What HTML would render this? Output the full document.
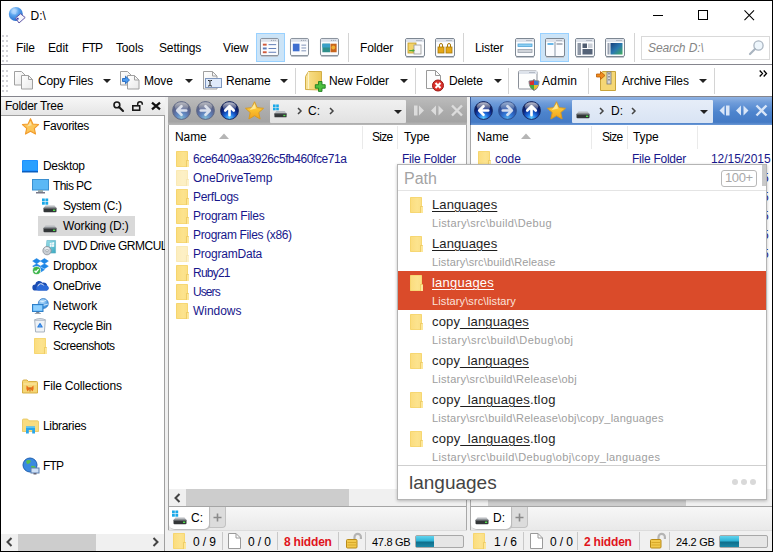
<!DOCTYPE html>
<html>
<head>
<meta charset="utf-8">
<title>D:\</title>
<style>
html,body{margin:0;padding:0;}
body{width:773px;height:552px;overflow:hidden;background:#fff;font-family:"Liberation Sans",sans-serif;font-size:12px;color:#000;}
#win{position:absolute;left:0;top:0;width:773px;height:552px;background:#f0f0f0;overflow:hidden;}
#frame{position:absolute;left:0;top:0;width:771px;height:550px;border:1px solid #000;z-index:100;pointer-events:none;}
.a{position:absolute;}
.t{position:absolute;white-space:nowrap;line-height:14px;height:14px;}
svg{position:absolute;overflow:visible;}
/* title bar */
#title{left:0;top:0;width:773px;height:31px;background:#fff;}
/* menu bar */
#menu{left:0;top:0;width:773px;height:64px;}
#menuline{left:0;top:64px;width:773px;height:1px;background:#85858d;}
#tool{left:0;top:0;width:773px;height:96px;}
#toolline{left:0;top:96px;width:773px;height:1px;background:#85858d;}
.sep{position:absolute;width:1px;background:#d0d0d0;}

.mt{position:absolute;top:41px;white-space:nowrap;line-height:14px;font-size:12px;letter-spacing:-0.15px;}
.tt{position:absolute;top:74px;white-space:nowrap;line-height:14px;font-size:12px;letter-spacing:-0.15px;}
.dd{position:absolute;top:79px;width:0;height:0;border-left:4px solid transparent;border-right:4px solid transparent;border-top:4px solid #222;}
.grip{position:absolute;left:2px;width:6px;height:27px;background:
 radial-gradient(circle at 1px 1px,#d2d2d8 1px,transparent 1.2px) 0 0/4px 5px;}
.vsep{position:absolute;width:1px;background:#d4d4d4;}
.ib{position:absolute;top:35px;width:26px;height:24px;}
.ibsel{position:absolute;top:33px;width:27px;height:27px;background:#cce4f7;border:1px solid #99d1ff;}

/* tree */
#tree{left:0;top:97px;width:165px;height:455px;overflow:hidden;}
.tr{position:absolute;white-space:nowrap;line-height:14px;font-size:12px;letter-spacing:-0.28px;}
/* panes */
.ph{position:absolute;top:97px;height:28px;}
.pbox{position:absolute;top:100px;height:23px;border-radius:1px;}
.ch{position:absolute;top:130px;white-space:nowrap;line-height:14px;font-size:12px;letter-spacing:-0.1px;}
.fn{position:absolute;white-space:nowrap;line-height:14px;font-size:12px;color:#17178c;letter-spacing:-0.05px;}
.fi{position:absolute;width:12px;height:16px;border-radius:1px;background:linear-gradient(90deg,#fbdc7c,#fce38e 60%,#fbdf84);box-shadow:inset 0 0 0 1px rgba(243,207,98,.55);}
.fi:after{content:'';position:absolute;right:-1px;bottom:0;width:2px;height:6px;background:#fde79a;border-left:1px solid #efcd66;border-top:1px solid #efcd66;border-radius:1px 1px 0 0;}
.fi.h{opacity:.5}
.st{position:absolute;top:535px;white-space:nowrap;line-height:14px;font-size:12px;letter-spacing:-0.1px;}
.ssep{position:absolute;top:532px;width:1px;height:18px;background:#c8c8c8;}
.nav{position:absolute;top:101px;width:19px;height:19px;}

/* popup */
#pop{left:397px;top:164px;width:370px;height:336px;box-sizing:border-box;border:1px solid #b4b4b4;background:#fff;box-shadow:0 1px 3px rgba(0,0,0,.25);overflow:hidden;}
.pr{position:absolute;left:0;width:368px;height:39px;}
.pr.sel{background:#da4b2a;}
.pn{position:absolute;left:34px;top:4px;white-space:nowrap;font-size:13px;line-height:16px;color:#1e1e1e;letter-spacing:0.13px;}
.pn u{text-decoration:underline;text-decoration-thickness:1px;text-underline-offset:2px;}
.pp{position:absolute;left:34px;top:24px;white-space:nowrap;font-size:11px;line-height:13px;color:#9e9e9e;letter-spacing:0.28px;}
.sel .pn{color:#fff}.sel .pp{color:#fbe3dc}
.pf{position:absolute;left:12px;top:4px;width:12px;height:16px;border-radius:1px;background:linear-gradient(90deg,#fbdc7c,#fce38e 60%,#fbdf84);box-shadow:inset 0 0 0 1px rgba(243,207,98,.55);}
.pf:after{content:'';position:absolute;right:-1px;bottom:0;width:2px;height:6px;background:#fde79a;border-left:1px solid #efcd66;border-top:1px solid #efcd66;border-radius:1px 1px 0 0;}
</style>
</head>
<body>
<div id="win">
<div class="a" style="left:0;top:0;width:773px;height:96px;background:#fff"></div>
<!-- TITLE BAR -->
<div id="title" class="a">

  <svg style="left:8px;top:6px" width="18" height="18" viewBox="0 0 18 18">
    <defs><radialGradient id="gl" cx="38%" cy="28%" r="75%"><stop offset="0" stop-color="#d9ecff"/><stop offset="0.45" stop-color="#58a3ee"/><stop offset="1" stop-color="#2468c8"/></radialGradient></defs>
    <circle cx="7.800" cy="8" r="7" fill="url(#gl)"/>
    <path d="M3 6 Q6 3 9 4 Q7 6 8 8 Q5 9 3 6Z" fill="#a9d3ff" opacity=".7"/>
    <path d="M7.500 12 L12.500 7.800 L17.200 11.500 L11 17Z" fill="#f6f6fc" stroke="#6058a8" stroke-width="1"/>
    <rect x="8.800" y="11.800" width="1.800" height="1.800" fill="#3b3bb0"/>
  </svg>
  <div class="t" style="left:30.500px;top:9px;font-size:12px;">D:\</div>
  <div class="a" style="left:653px;top:15px;width:10px;height:1px;background:#000"></div>
  <div class="a" style="left:698px;top:10px;width:8px;height:8px;border:1px solid #000"></div>
  <svg style="left:743.5px;top:10px" width="10.500" height="10.500" viewBox="0 0 11 11"><path d="M0.5 0.5 L10.5 10.5 M10.5 0.5 L0.5 10.5" stroke="#000" stroke-width="1.1" fill="none"/></svg>
</div>
<!-- MENU BAR -->
<div id="menu" class="a">
  <div class="grip" style="top:35px"></div>
  <div class="mt" style="left:16px">File</div>
  <div class="mt" style="left:48px">Edit</div>
  <div class="mt" style="left:82px;letter-spacing:-0.8px">FTP</div>
  <div class="mt" style="left:116px">Tools</div>
  <div class="mt" style="left:159px">Settings</div>
  <div class="mt" style="left:223px">View</div>
  <div class="ibsel" style="left:256px"></div>
  <!-- view icon 1: details -->
  <svg style="left:260px;top:38px" width="19" height="19" viewBox="0 0 20 20">
    <rect x="1" y="18.500" width="18" height="1.500" rx=".7" fill="#c4c8cf"/><rect x="0.5" y="0.5" width="19" height="18" rx="1.5" fill="#fbfcfe" stroke="#7d8792"/>
    <rect x="1" y="1" width="18" height="3" fill="#dde2ea"/><rect x="11.500" y="2" width="1" height="1" fill="#8a93a0"/><rect x="13.500" y="2" width="1" height="1" fill="#8a93a0"/><rect x="15.500" y="2" width="1" height="1" fill="#8a93a0"/>
    <rect x="3" y="6" width="4" height="2" fill="#d05a3a"/><rect x="9" y="6.5" width="8" height="1" fill="#5b79b5"/>
    <rect x="3" y="10" width="4" height="2" fill="#5b79b5"/><rect x="9" y="10.5" width="8" height="1" fill="#5b79b5"/>
    <rect x="3" y="14" width="4" height="2" fill="#d05a3a"/><rect x="9" y="14.5" width="8" height="1" fill="#5b79b5"/>
  </svg>
  <!-- view icon 2 -->
  <svg style="left:290px;top:38px" width="19" height="19" viewBox="0 0 20 20">
    <rect x="1" y="18.500" width="18" height="1.500" rx=".7" fill="#c4c8cf"/><rect x="0.5" y="0.5" width="19" height="18" rx="1.5" fill="#fbfcfe" stroke="#7d8792"/>
    <rect x="1" y="1" width="18" height="3" fill="#dde2ea"/><rect x="11.500" y="2" width="1" height="1" fill="#8a93a0"/><rect x="13.500" y="2" width="1" height="1" fill="#8a93a0"/><rect x="15.500" y="2" width="1" height="1" fill="#8a93a0"/>
    <rect x="3" y="6" width="7" height="8" fill="#3f6fd0"/>
    <rect x="12" y="7" width="5" height="1" fill="#7b8fb5"/><rect x="12" y="10" width="5" height="1" fill="#7b8fb5"/><rect x="12" y="13" width="5" height="1" fill="#7b8fb5"/>
  </svg>
  <!-- view icon 3 -->
  <svg style="left:320px;top:38px" width="19" height="19" viewBox="0 0 20 20">
    <rect x="1" y="18.500" width="18" height="1.500" rx=".7" fill="#c4c8cf"/><rect x="0.5" y="0.5" width="19" height="18" rx="1.5" fill="#fbfcfe" stroke="#7d8792"/>
    <rect x="1" y="1" width="18" height="3" fill="#dde2ea"/><rect x="11.500" y="2" width="1" height="1" fill="#8a93a0"/><rect x="13.500" y="2" width="1" height="1" fill="#8a93a0"/><rect x="15.500" y="2" width="1" height="1" fill="#8a93a0"/>
    <rect x="2.5" y="6" width="8" height="9" fill="#2f8f8a"/><rect x="2.5" y="6" width="8" height="4" fill="#3aa0c8"/>
    <rect x="11" y="6" width="6.5" height="9" fill="#c8641c"/><circle cx="14" cy="10" r="2" fill="#f0b030"/>
  </svg>
  <div class="vsep" style="left:348px;top:33px;height:29px"></div>
  <div class="mt" style="left:360px">Folder</div>
  <!-- folder icon 1 -->
  <svg style="left:405px;top:38px" width="20" height="19" viewBox="0 0 20 19">
    <rect x="1" y="18.500" width="18" height="1.500" rx=".7" fill="#c4c8cf"/><rect x="0.5" y="0.5" width="19" height="18" rx="1.5" fill="#fbfcfe" stroke="#7d8792"/>
    <rect x="1" y="1" width="18" height="3" fill="#dde2ea"/><rect x="11.500" y="2" width="1" height="1" fill="#8a93a0"/><rect x="13.500" y="2" width="1" height="1" fill="#8a93a0"/><rect x="15.500" y="2" width="1" height="1" fill="#8a93a0"/>
    <rect x="3" y="5" width="8" height="10" fill="#f3d36a" stroke="#c09a20" stroke-width=".8"/>
    <rect x="9" y="7" width="7" height="9" fill="#f6f6f6" stroke="#9a9a9a" stroke-width=".8"/>
    <path d="M4 12 h5 v-1.5 l3 2.5 -3 2.5 v-1.5 h-5z" fill="#4aa83a" transform="scale(.7) translate(2,5)"/>
  </svg>
  <!-- folder icon 2 -->
  <svg style="left:435px;top:38px" width="20" height="19" viewBox="0 0 20 19">
    <rect x="1" y="18.500" width="18" height="1.500" rx=".7" fill="#c4c8cf"/><rect x="0.5" y="0.5" width="19" height="18" rx="1.5" fill="#fbfcfe" stroke="#7d8792"/>
    <rect x="1" y="1" width="18" height="3" fill="#dde2ea"/><rect x="11.500" y="2" width="1" height="1" fill="#8a93a0"/><rect x="13.500" y="2" width="1" height="1" fill="#8a93a0"/><rect x="15.500" y="2" width="1" height="1" fill="#8a93a0"/>
    <rect x="3" y="9" width="6" height="6" fill="#e6a817" stroke="#a87808" stroke-width=".8"/>
    <path d="M4.5 9 v-2 a1.5 1.5 0 0 1 3 0 v2" fill="none" stroke="#a87808"/>
    <rect x="11" y="9" width="6" height="6" fill="#e6a817" stroke="#a87808" stroke-width=".8"/>
    <path d="M12.5 9 v-2 a1.5 1.5 0 0 1 3 0 v2" fill="none" stroke="#a87808"/>
  </svg>
  <div class="vsep" style="left:463px;top:33px;height:29px"></div>
  <div class="mt" style="left:475px">Lister</div>
  <!-- lister icon 1 -->
  <svg style="left:515px;top:38px" width="20" height="19" viewBox="0 0 20 19">
    <rect x="1" y="18.500" width="18" height="1.500" rx=".7" fill="#c4c8cf"/><rect x="0.5" y="0.5" width="19" height="18" rx="1.5" fill="#fbfcfe" stroke="#7d8792"/>
    <rect x="1" y="1" width="18" height="3" fill="#dde2ea"/><rect x="11.500" y="2" width="1" height="1" fill="#8a93a0"/><rect x="13.500" y="2" width="1" height="1" fill="#8a93a0"/><rect x="15.500" y="2" width="1" height="1" fill="#8a93a0"/>
    <rect x="3" y="6" width="14" height="2.500" fill="#8fd0f2" stroke="#4fa3d8" stroke-width=".8"/>
    <rect x="3" y="11.500" width="14" height="3" fill="#cfd3d9" stroke="#9aa1ab" stroke-width=".8"/>
  </svg>
  <div class="ibsel" style="left:540px"></div>
  <!-- lister icon 2 (dual) -->
  <svg style="left:545px;top:38px" width="20" height="19" viewBox="0 0 20 19">
    <rect x="1" y="18.500" width="18" height="1.500" rx=".7" fill="#c4c8cf"/><rect x="0.5" y="0.5" width="19" height="18" rx="1.5" fill="#fbfcfe" stroke="#7d8792"/>
    <rect x="1" y="1" width="18" height="3" fill="#dde2ea"/><rect x="11.500" y="2" width="1" height="1" fill="#8a93a0"/><rect x="13.500" y="2" width="1" height="1" fill="#8a93a0"/><rect x="15.500" y="2" width="1" height="1" fill="#8a93a0"/>
    <rect x="2.5" y="5" width="6" height="2" fill="#69b7e8"/><rect x="11.5" y="5" width="6" height="2" fill="#b0b6c0"/>
    <rect x="9.5" y="4" width="1" height="14" fill="#8a95a5"/>
  </svg>
  <!-- lister icon 3 -->
  <svg style="left:575px;top:38px" width="20" height="19" viewBox="0 0 20 19">
    <rect x="1" y="18.500" width="18" height="1.500" rx=".7" fill="#c4c8cf"/><rect x="0.5" y="0.5" width="19" height="18" rx="1.5" fill="#fbfcfe" stroke="#7d8792"/>
    <rect x="1" y="1" width="18" height="3" fill="#dde2ea"/><rect x="11.500" y="2" width="1" height="1" fill="#8a93a0"/><rect x="13.500" y="2" width="1" height="1" fill="#8a93a0"/><rect x="15.500" y="2" width="1" height="1" fill="#8a93a0"/>
    <rect x="2.500" y="5" width="3.500" height="12" fill="#8e97a5"/>
    <rect x="7.500" y="5.500" width="4.500" height="4.500" fill="#4f5c70"/><rect x="13" y="5.500" width="4.500" height="4.500" fill="#c9ced6"/><rect x="7.500" y="11" width="10" height="5.500" fill="#556378"/>
  </svg>
  <!-- lister icon 4 -->
  <svg style="left:605px;top:38px" width="20" height="19" viewBox="0 0 20 19">
    <rect x="1" y="18.500" width="18" height="1.500" rx=".7" fill="#c4c8cf"/><rect x="0.5" y="0.5" width="19" height="18" rx="1.5" fill="#fbfcfe" stroke="#7d8792"/>
    <rect x="1" y="1" width="18" height="3" fill="#dde2ea"/><rect x="11.500" y="2" width="1" height="1" fill="#8a93a0"/><rect x="13.500" y="2" width="1" height="1" fill="#8a93a0"/><rect x="15.500" y="2" width="1" height="1" fill="#8a93a0"/>
    <defs><linearGradient id="pic" x1="0" y1="0" x2="1" y2="1"><stop offset="0" stop-color="#163f7a"/><stop offset=".5" stop-color="#2a78b0"/><stop offset="1" stop-color="#3fae5e"/></linearGradient></defs><rect x="5.500" y="5" width="12" height="11.500" fill="url(#pic)"/>
    <rect x="2.500" y="5" width="2" height="11.500" fill="#9aa2b0"/>
  </svg>
  <div class="vsep" style="left:634px;top:33px;height:29px"></div>
  <div class="a" style="left:641px;top:36px;width:127px;height:22px;border:1px solid #d9d9d9;background:#fff"></div>
  <div class="mt" style="left:648px;top:41px;font-style:italic;color:#858585;font-size:12px;letter-spacing:-0.1px">Search D:\</div>
  <svg style="left:748px;top:39px" width="17" height="17" viewBox="0 0 17 17">
    <circle cx="10.5" cy="6.5" r="4.6" fill="#eef6fc" stroke="#a9b4c0" stroke-width="1.3"/>
    <path d="M7 10 L2 15" stroke="#a9b4c0" stroke-width="2.2" stroke-linecap="round"/>
  </svg>
</div>
<div id="menuline" class="a"></div>
<!-- TOOLBAR -->
<div id="tool" class="a">
  <div class="grip" style="top:70px;height:22px"></div>
  <svg style="left:0;top:0" width="773" height="100" viewBox="0 0 773 100">
    <defs><linearGradient id="pg" x1="0" y1="0" x2="1" y2="1"><stop offset="0" stop-color="#ffffff"/><stop offset="1" stop-color="#e9e9e9"/></linearGradient></defs>
    <!-- copy -->
    <path d="M14.500 71.500 h7 l3.500 3.500 v10 h-10.500z" fill="url(#pg)" stroke="#a0a0a0"/>
    <path d="M21.500 75.500 h7 l4 4 v9.500 h-11z" fill="url(#pg)" stroke="#a0a0a0"/>
    <path d="M28.500 75.500 v4 h4" fill="none" stroke="#a0a0a0"/>
    <!-- move -->
    <path d="M120.500 71.500 h7 l3.500 3.500 v10 h-10.500z" fill="url(#pg)" stroke="#a0a0a0"/>
    <path d="M127.500 75.500 h7 l4.500 4.500 v9 h-11.500z" fill="url(#pg)" stroke="#a0a0a0"/>
    <path d="M134.500 75.500 v4.500 h4.500" fill="none" stroke="#a0a0a0"/>
    <path d="M122.500 78.500 h3 v-2.300 l4 3.800 -4 3.800 v-2.300 h-3z" fill="#4a9af0" stroke="#2068c0" stroke-width=".9" stroke-linejoin="round"/>
    <!-- rename -->
    <path d="M203.500 71.500 h9 l4.500 4.500 v13 h-13.500z" fill="url(#pg)" stroke="#a0a0a0"/>
    <path d="M212.500 71.500 v4.500 h4.500" fill="none" stroke="#a0a0a0"/>
    <rect x="205.500" y="78.500" width="16" height="9" fill="#dfeafa" stroke="#7d95bd"/>
    <path d="M208 80.500 h1.300 l0.700 0.700 l0.700 -0.700 h1.300 M210 81 v4.500 M208 86 h1.300 l0.700 -0.700 l0.700 0.700 h1.300" stroke="#111" stroke-width=".9" fill="none"/>
  </svg>
  
  <div class="tt" style="left:38px">Copy Files</div>
  <div class="dd" style="left:103px"></div>
  <!-- move -->
  <div class="tt" style="left:144px">Move</div>
  <div class="dd" style="left:185px"></div>
  <!-- rename -->
  <div class="tt" style="left:226px">Rename</div>
  <div class="dd" style="left:280px"></div>
  <div class="vsep" style="left:295px;top:68px;height:26px"></div>
  <!-- new folder -->
  <svg style="left:305px;top:70px" width="22" height="22" viewBox="0 0 22 22">
    <defs><linearGradient id="nf" x1="0" y1="0" x2="1" y2="0"><stop offset="0" stop-color="#f9e39a"/><stop offset=".25" stop-color="#f7dc83"/><stop offset="1" stop-color="#eec95c"/></linearGradient></defs>
    <path d="M0.500 19.500 v-13 l3 -5 h13 v18.500z" fill="url(#nf)" stroke="#d2ae48"/>
    <path d="M3.500 2 v17" stroke="#fdf3c8" stroke-width="1.200"/>
    <path d="M13.500 11.500 h3.500 v3.200 h3.200 v3.500 h-3.200 v3.200 h-3.500 v-3.200 h-3.200 v-3.500 h3.200z" fill="#4cc03e" stroke="#1f7d1f" stroke-width=".9" stroke-linejoin="round"/>
  </svg>
  <div class="tt" style="left:329px">New Folder</div>
  <div class="dd" style="left:400px"></div>
  <div class="vsep" style="left:415px;top:68px;height:26px"></div>
  <!-- delete -->
  <svg style="left:425px;top:70px" width="22" height="22" viewBox="0 0 22 22">
    <path d="M1.500 0.5 h9 l5 5 v13 h-14z" fill="#fdfdfd" stroke="#9a9a9a"/>
    <path d="M10.500 0.5 v5 h5" fill="none" stroke="#9a9a9a"/>
    <circle cx="13" cy="15.500" r="5.500" fill="#d9312b" stroke="#9c1a16"/>
    <path d="M10.500 13 l5 5 M15.500 13 l-5 5" stroke="#fff" stroke-width="2"/>
  </svg>
  <div class="tt" style="left:449px">Delete</div>
  <div class="dd" style="left:494px"></div>
  <div class="vsep" style="left:508px;top:68px;height:26px"></div>
  <!-- admin -->
  <svg style="left:518px;top:70px" width="22" height="22" viewBox="0 0 22 22">
    <rect x="0.5" y="1" width="18.500" height="18" rx="1.200" fill="#fdfdfd" stroke="#8a8f98"/>
    <rect x="1" y="1" width="18" height="3" fill="#dde2ea"/><rect x="11.500" y="2" width="1" height="1" fill="#8a93a0"/><rect x="13.500" y="2" width="1" height="1" fill="#8a93a0"/><rect x="15.500" y="2" width="1" height="1" fill="#8a93a0"/>
    <path d="M11 11 q4 0 5 -1.500 q1 1.500 5 1.500 q0 7 -5 9.500 q-5 -2.500 -5 -9.500z" fill="#3a78d0" stroke="#888"/>
    <path d="M16 10 v10 q-4.500 -2.500 -4.500 -8.500 q3 0 4.500 -1.500z" fill="#d9312b"/>
    <path d="M16 15 h4.500 q-1 3.500 -4.500 5z" fill="#e8c030"/>
    <path d="M11.500 15 h4.500 v5 q-3.500 -1.500 -4.500 -5z" fill="#3fae3a"/>
  </svg>
  <div class="tt" style="left:542px;letter-spacing:0.25px">Admin</div>
  <div class="vsep" style="left:588px;top:68px;height:26px"></div>
  <!-- archive -->
  <svg style="left:596px;top:69px" width="23" height="23" viewBox="0 0 23 23">
    <path d="M4.500 21.500 v-17 l2 -2 h13 v19z" fill="#f5d775" stroke="#c9a43a"/>
    <rect x="11" y="3" width="4" height="12" fill="#d8d8d8" stroke="#777" stroke-width=".8"/>
    <path d="M13 4 v9" stroke="#555" stroke-dasharray="1.500 1.500"/>
    <path d="M0.5 5 h4 v-2.500 l4.500 4 -4.500 4 v-2.500 h-4z" fill="#f08a1c" stroke="#b85c08" stroke-width=".8"/>
  </svg>
  <div class="tt" style="left:622px">Archive Files</div>
  <div class="dd" style="left:699px"></div>
  <div class="vsep" style="left:714px;top:68px;height:26px"></div>
  <svg style="left:759px;top:70px" width="9" height="7" viewBox="0 0 9 7"><path d="M0.700 0.500 L3.500 3.500 L0.700 6.500 M4.700 0.500 L7.500 3.500 L4.700 6.500" stroke="#000" stroke-width="1.300" fill="none"/></svg>
</div>
<div id="toolline" class="a"></div>
<!-- PANES -->
<div id="tree" class="a">
  <div class="a" style="left:1px;top:0;width:166px;height:18px;background:linear-gradient(#f7f7f7,#e5e5e5)"></div>
  <div class="tr" style="left:5px;top:2px;letter-spacing:-0.3px">Folder Tree</div>
  <svg style="left:113px;top:4px" width="11" height="11" viewBox="0 0 11 11"><circle cx="3.900" cy="3.900" r="2.900" fill="none" stroke="#1a1a1a" stroke-width="1.600"/><path d="M6 6 L10 10" stroke="#1a1a1a" stroke-width="2.100" stroke-linecap="round"/></svg>
  <svg style="left:132px;top:4px" width="12" height="11" viewBox="0 0 12 11"><rect x="0.800" y="4.800" width="6.900" height="4.400" fill="none" stroke="#1a1a1a" stroke-width="1.600"/><path d="M5.700 4.500 V3 a2.300 2.300 0 0 1 4.600 0 V3.800" fill="none" stroke="#1a1a1a" stroke-width="1.500"/></svg>
  <svg style="left:151px;top:5px" width="10" height="8" viewBox="0 0 10 8"><path d="M1 0.700 L9 7.300 M9 0.700 L1 7.300" stroke="#111" stroke-width="2.300"/></svg>
  <div class="a" style="left:1px;top:18px;width:163px;height:436px;background:#fff;border-top:1px solid #a0a0a0;border-right:1px solid #a0a0a0"></div>
  <!-- rows -->
  <svg style="left:22px;top:21px" width="17" height="17" viewBox="0 0 20 20"><path d="M10 0.800 L12.800 7 L19.500 7.700 L14.500 12.200 L15.900 18.900 L10 15.500 L4.100 18.900 L5.500 12.200 L0.5 7.700 L7.200 7Z" fill="#fbc65a" stroke="#f29a2a" stroke-width="1.300" stroke-linejoin="round"/><path d="M10 4 L11.500 8.500 L6 10 Z" fill="#fee9b0" opacity=".8"/></svg>
  <div class="tr" style="left:43px;top:22px;letter-spacing:-0.382px">Favorites</div>
  <svg style="left:22px;top:63px" width="16" height="13" viewBox="0 0 16 13"><rect x="0" y="0" width="16" height="12" rx="1" fill="#1e90ff"/><rect x="1" y="1" width="14" height="9" fill="#2aa0ff"/><rect x="0" y="11" width="16" height="1.500" fill="#0a5fc0"/></svg>
  <div class="tr" style="left:43px;top:62px;letter-spacing:-0.355px">Desktop</div>
  <svg style="left:32px;top:82px" width="17" height="15" viewBox="0 0 17 15"><rect x="0.5" y="0.5" width="16" height="10.500" fill="#5bb8f5" stroke="#3a8fd0"/><rect x="6" y="11" width="5" height="2" fill="#9aa"/><rect x="4" y="13" width="9" height="1.500" fill="#778"/></svg>
  <div class="tr" style="left:53px;top:82px;letter-spacing:-0.598px">This PC</div>
  <svg style="left:42px;top:101px" width="16" height="16" viewBox="0 0 16 16"><rect x="0" y="0.5" width="2.800" height="2.800" fill="#19a8e8"/><rect x="3.400" y="0.5" width="2.800" height="2.800" fill="#19a8e8"/><rect x="0" y="3.900" width="2.800" height="2.800" fill="#19a8e8"/><rect x="3.400" y="3.900" width="2.800" height="2.800" fill="#19a8e8"/><path d="M3.500 7.500 H12.500 L14.500 10 H1.500Z" fill="#b9bcc0"/><rect x="1.500" y="9.800" width="13" height="4.400" rx="1" fill="#333638"/><rect x="1.500" y="9.800" width="13" height="1" fill="#6a6e72"/><rect x="11" y="11.600" width="2.200" height="1.400" fill="#4fe04a"/></svg>
  <div class="tr" style="left:63px;top:102px;letter-spacing:-0.444px">System (C:)</div>
  <div class="a" style="left:38px;top:119px;width:97px;height:20px;background:#d9d9d9"></div>
  <svg style="left:42px;top:121px" width="16" height="16" viewBox="0 0 16 16"><path d="M3.500 7.500 H12.500 L14.500 10 H1.500Z" fill="#b9bcc0"/><rect x="1.500" y="9.800" width="13" height="4.400" rx="1" fill="#333638"/><rect x="1.500" y="9.800" width="13" height="1" fill="#6a6e72"/><rect x="11" y="11.600" width="2.200" height="1.400" fill="#4fe04a"/></svg>
  <div class="tr" style="left:63px;top:122px;letter-spacing:-0.12px">Working (D:)</div>
  <svg style="left:42px;top:143px" width="15.500" height="15.500" viewBox="0 0 16 16"><defs><linearGradient id="dvd" x1="0" y1="0" x2="1" y2="1"><stop offset="0" stop-color="#9fe0ea"/><stop offset="1" stop-color="#38a8c0"/></linearGradient></defs><path d="M5 0.500 h9 v13 h-10z" fill="url(#dvd)" stroke="#5ab0c4" stroke-width=".6"/><path d="M8 3 l2 -0.400 v2 l-2 0.200z M10.400 2.500 l2.200 -0.500 v2.300 l-2.200 0.300z M8 5.200 l2 -0.200 v2 l-2 0.300z M10.400 4.900 l2.200 -0.300 v2.400 l-2.200 0.300z" fill="#fff" opacity=".9"/><circle cx="5.200" cy="11" r="4.300" fill="#c9ced4" stroke="#858c95" stroke-width=".8"/><path d="M2.500 8.500 a4 4 0 0 1 5 0 l-2.300 2.500z" fill="#eef1f4" opacity=".9"/><circle cx="5.200" cy="11" r="1.200" fill="#f8f8f8" stroke="#858c95" stroke-width=".6"/></svg>
  <div class="tr" style="left:63px;top:142px;letter-spacing:-0.5px">DVD Drive GRMCUL</div>
  <svg style="left:31.500px;top:161px" width="17" height="17" viewBox="0 0 16 16"><path stroke="#1d86e6" stroke-width=".5" d="M4.300 0.500 L8 2.900 L4.300 5.300 L0.600 2.900Z M11.700 0.500 L15.400 2.900 L11.700 5.300 L8 2.900Z M4.300 5.300 L8 7.700 L4.300 10.100 L0.600 7.700Z M11.700 5.300 L15.400 7.700 L11.700 10.100 L8 7.700Z M8 8.700 L11.700 11 L8 13.400 L4.300 11Z" fill="#1d86e6"/><circle cx="4.300" cy="11.800" r="3.800" fill="#3cb54a" stroke="#fff" stroke-width=".7"/><path d="M2.400 11.900 l1.400 1.400 l2.400 -2.800" stroke="#fff" stroke-width="1.300" fill="none"/></svg>
  <div class="tr" style="left:53px;top:162px;letter-spacing:-0.193px">Dropbox</div>
  <svg style="left:32px;top:183px" width="17" height="11" viewBox="0 0 17 11"><path d="M3.500 10.500 a3 3 0 0 1 -0.300 -6 a4 4 0 0 1 7.300 -1.800 a3.500 3.500 0 0 1 4.700 3.300 a2.400 2.400 0 0 1 -0.500 4.500z" fill="#1a4db3"/><path d="M6.500 10.500 a2.300 2.300 0 0 1 0 -4.600 a3.200 3.200 0 0 1 5.800 -0.400 a2.600 2.600 0 0 1 2.800 5z" fill="#2b6ad8"/><path d="M5.800 6.300 a3.200 3.200 0 0 1 6 -0.800" stroke="#fff" stroke-width=".9" fill="none"/></svg>
  <div class="tr" style="left:53px;top:182px;letter-spacing:-0.37px">OneDrive</div>
  <svg style="left:32px;top:201px" width="17" height="16" viewBox="0 0 17 16"><defs><radialGradient id="ng" cx="40%" cy="30%" r="70%"><stop offset="0" stop-color="#bfe4ff"/><stop offset="1" stop-color="#2f86d8"/></radialGradient></defs><circle cx="11.300" cy="5.500" r="5" fill="url(#ng)" stroke="#2a72c0" stroke-width=".7"/><path d="M7.500 3 q3.500 1.500 7 -1 M6.600 6.500 q4.500 2 9.500 -0.500" stroke="#e4f3ff" stroke-width=".8" fill="none"/><rect x="0.500" y="6.500" width="10.500" height="7" fill="#62b8f7" stroke="#2f7fc8"/><rect x="1.500" y="7.500" width="8.500" height="5" fill="#8fd0ff"/><rect x="4.200" y="14" width="3.200" height="1" fill="#7a8694"/><rect x="2.800" y="15" width="6" height="1" fill="#9aa4b0"/></svg>
  <div class="tr" style="left:53px;top:202px;letter-spacing:0.031px">Network</div>
  <svg style="left:33px;top:220px" width="14" height="16" viewBox="0 0 15 17"><path d="M1.800 3.500 h11.400 l-1 12.500 h-9.400z" fill="#eef2f6" stroke="#9aa6b4" stroke-width=".9"/><path d="M1 3.300 q6.500 -3.500 13 0" fill="#d6dde6" stroke="#9aa6b4" stroke-width=".8"/><path d="M7.500 7 l2.300 3.600 h-4.600z" fill="none" stroke="#2a7fe0" stroke-width="1.300" stroke-linejoin="round"/><circle cx="7.500" cy="9.400" r=".8" fill="#2a7fe0"/></svg>
  <div class="tr" style="left:53px;top:222px;letter-spacing:-0.436px">Recycle Bin</div>
  <div class="fi" style="left:34px;top:241px"></div>
  <div class="tr" style="left:53px;top:242px;letter-spacing:-0.46px">Screenshots</div>
  <svg style="left:22px;top:282px" width="16" height="15" viewBox="0 0 16 15"><path d="M0.500 14 v-11.500 q0 -1.500 1.500 -1.500 h3 l1.500 1.500 h8 q1 0 1 1 v10.500z" fill="#f5d675" stroke="#d2a838" stroke-width=".9"/><path d="M1.500 5 h13" stroke="#fbe9a8" stroke-width="1"/><path d="M8 9.500 L4.500 6.500 Q3.800 10 5.500 12.500 Z M8 9.500 L11.500 6.500 Q12.200 10 10.500 12.500 Z" fill="#e8701a"/><path d="M8 8 v4.500" stroke="#b04808" stroke-width=".9"/></svg>
  <div class="tr" style="left:43px;top:282px;letter-spacing:-0.165px">File Collections</div>
  <svg style="left:22px;top:321px" width="17" height="16" viewBox="0 0 17 16"><path d="M0.500 13.500 v-11.500 q0 -1 1 -1 h4 l1.500 1.800 h8.500 q1 0 1 1 v9.700z" fill="#f9dc80" stroke="#e6c45a" stroke-width=".8"/><path d="M4 8.500 h9 v7 h-2.800 v-3.600 h-3.400 v3.600 h-2.800z" fill="#29a6ea"/><path d="M4 8.500 h9 v1.500 h-9z" fill="#5cc4f5"/></svg>
  <div class="tr" style="left:43px;top:322px;letter-spacing:-0.316px">Libraries</div>
  <svg style="left:22px;top:360px" width="18" height="18" viewBox="0 0 18 18"><circle cx="8" cy="8" r="7" fill="#3a8ae0" stroke="#1f5fb0"/><path d="M4 4 q3 -2 5 0 q-1 3 -4 3z M9 9 q4 -1 5 2 q-2 3 -4 2z" fill="#5bc04a"/><rect x="9" y="11" width="8" height="5" fill="#cfe0f5" stroke="#5a7fb0"/><rect x="11.500" y="16" width="3" height="1.500" fill="#667"/></svg>
  <div class="tr" style="left:43px;top:362px;letter-spacing:-0.8px">FTP</div>
  <!-- scrollbar -->
  <div class="a" style="left:1px;top:437px;width:163px;height:17px;background:#f0f0f0"></div>
  <div class="a" style="left:18px;top:437px;width:78px;height:17px;background:#cdcdcd"></div>
  <svg style="left:6px;top:440px" width="7" height="10" viewBox="0 0 7 10"><path d="M5.500 1 L1.500 5 L5.500 9" stroke="#444" stroke-width="2" fill="none"/></svg>
  <svg style="left:152px;top:440px" width="7" height="10" viewBox="0 0 7 10"><path d="M1.500 1 L5.500 5 L1.500 9" stroke="#444" stroke-width="2" fill="none"/></svg>
</div>
<svg width="0" height="0" style="left:0;top:0"><defs><radialGradient id="orb" cx="50%" cy="92%" r="75%"><stop offset="0" stop-color="#5fd0ff"/><stop offset=".35" stop-color="#1f6fe0"/><stop offset=".7" stop-color="#0c2a8a"/><stop offset="1" stop-color="#08154f"/></radialGradient><linearGradient id="gloss" x1="0" y1="0" x2="0" y2="1"><stop offset="0" stop-color="#fff" stop-opacity=".75"/><stop offset="1" stop-color="#fff" stop-opacity=".05"/></linearGradient><linearGradient id="starg" x1="0" y1="0" x2="0" y2="1"><stop offset="0" stop-color="#ffe27a"/><stop offset=".5" stop-color="#fbc02d"/><stop offset="1" stop-color="#f0a020"/></linearGradient></defs></svg>
<div id="lp" class="a">
  <!-- left pane frame -->
  <div class="a" style="left:168px;top:97px;width:299px;height:433px;background:#fff;border-left:1px solid #a0a0a0;border-right:1px solid #a8a8a8;box-sizing:border-box"></div>
  <div class="ph" style="left:168px;width:299px;background:linear-gradient(#bcbcbc,#adadad 45%,#a4a4a4 88%,#b8b8b8)"></div>
  <svg class="nav" style="left:172px" viewBox="0 0 20 20"><g opacity="0.5"><circle cx="10" cy="10" r="9.400" fill="url(#orb)" stroke="#14265f" stroke-width="1"/><ellipse cx="10" cy="5.800" rx="7.200" ry="4.600" fill="url(#gloss)"/></g><path d="M15 10 H6.500 M10 5.500 L5.500 10 L10 14.500" stroke="#eef2f8" stroke-width="2.800" fill="none" stroke-linecap="round" stroke-linejoin="round" opacity="0.85"/></svg><svg class="nav" style="left:196px" viewBox="0 0 20 20"><g opacity="0.5"><circle cx="10" cy="10" r="9.400" fill="url(#orb)" stroke="#14265f" stroke-width="1"/><ellipse cx="10" cy="5.800" rx="7.200" ry="4.600" fill="url(#gloss)"/></g><path d="M5 10 H13.500 M10 5.500 L14.500 10 L10 14.500" stroke="#eef2f8" stroke-width="2.800" fill="none" stroke-linecap="round" stroke-linejoin="round" opacity="0.85"/></svg><svg class="nav" style="left:220px" viewBox="0 0 20 20"><g opacity="1"><circle cx="10" cy="10" r="9.400" fill="url(#orb)" stroke="#14265f" stroke-width="1"/><ellipse cx="10" cy="5.800" rx="7.200" ry="4.600" fill="url(#gloss)"/></g><path d="M10 15 V6.500 M5.500 10 L10 5.500 L14.500 10" stroke="#fff" stroke-width="2.800" fill="none" stroke-linecap="round" stroke-linejoin="round" opacity="1"/></svg><svg class="nav" style="left:245px;top:101px" viewBox="0 0 20 20"><path d="M10 0.800 L12.800 7 L19.500 7.700 L14.500 12.200 L15.900 18.900 L10 15.500 L4.100 18.900 L5.500 12.200 L0.5 7.700 L7.200 7Z" fill="url(#starg)" stroke="#d99a1c" stroke-width="1" stroke-linejoin="round"/><path d="M10 3 L11.600 8 L5 9.500 Z" fill="#fff3b0" opacity=".7"/></svg>
  <div class="pbox" style="left:270px;width:136px;background:linear-gradient(#f0f0f0,#e2e2e2)"></div>
  <svg style="left:273px;top:104px" width="15" height="15" viewBox="0 0 16 16"><rect x="0" y="0.5" width="2.800" height="2.800" fill="#19a8e8"/><rect x="3.400" y="0.5" width="2.800" height="2.800" fill="#19a8e8"/><rect x="0" y="3.900" width="2.800" height="2.800" fill="#19a8e8"/><rect x="3.400" y="3.900" width="2.800" height="2.800" fill="#19a8e8"/><path d="M3.500 7.500 H12.500 L14.500 10 H1.500Z" fill="#b9bcc0"/><rect x="1.500" y="9.800" width="13" height="4.400" rx="1" fill="#333638"/><rect x="1.500" y="9.800" width="13" height="1" fill="#6a6e72"/><rect x="11" y="11.600" width="2.200" height="1.400" fill="#4fe04a"/></svg>
  <svg style="left:297px;top:107px" width="5" height="8" viewBox="0 0 5 8"><path d="M1 1 L4 4 L1 7" stroke="#444" stroke-width="1.500" fill="none"/></svg>
  <div class="t" style="left:308px;top:104px;font-size:12px">C:</div>
  <svg style="left:329px;top:107px" width="5" height="8" viewBox="0 0 5 8"><path d="M1 1 L4 4 L1 7" stroke="#444" stroke-width="1.500" fill="none"/></svg>
  <div class="dd" style="left:394px;top:110px"></div>
  <svg style="left:412px;top:104px" width="52" height="13" viewBox="0 0 52 13" fill="#dcdcdc"><rect x="2" y="1.500" width="3.500" height="10"/><path d="M7 1.500 L12 6.500 L7 11.500Z"/><path d="M24 1.500 L19 6.500 L24 11.500Z M26.500 1.500 L31.500 6.500 L26.500 11.500Z"/><path d="M40 1.500 L50 11.500 M50 1.500 L40 11.500" stroke="#dcdcdc" stroke-width="2.400"/></svg>
  <!-- column header -->
  <div class="ch" style="left:175px">Name</div>
  <svg style="left:219px;top:133px" width="10" height="6" viewBox="0 0 10 6"><path d="M0 6 L5 0.5 L10 6Z" fill="#b5b5b5"/></svg>
  <div class="a" style="left:362px;top:126px;width:1px;height:23px;background:#eaeaea"></div>
  <div class="ch" style="left:372px;letter-spacing:-0.7px">Size</div>
  <div class="a" style="left:397px;top:126px;width:1px;height:23px;background:#eaeaea"></div>
  <div class="ch" style="left:404px">Type</div>
  <div class="fi" style="left:176px;top:151px"></div><div class="fn" style="left:193px;top:152px;letter-spacing:-0.44px">6ce6409aa3926c5fb460fce71a</div>
  <div class="fi h" style="left:176px;top:170px"></div><div class="fn" style="left:193px;top:171px">OneDriveTemp</div>
  <div class="fi" style="left:176px;top:189px"></div><div class="fn" style="left:193px;top:190px;letter-spacing:-0.319px">PerfLogs</div>
  <div class="fi" style="left:176px;top:208px"></div><div class="fn" style="left:193px;top:209px;letter-spacing:-0.249px">Program Files</div>
  <div class="fi" style="left:176px;top:227px"></div><div class="fn" style="left:193px;top:228px;letter-spacing:-0.348px">Program Files (x86)</div>
  <div class="fi h" style="left:176px;top:246px"></div><div class="fn" style="left:193px;top:247px;letter-spacing:-0.208px">ProgramData</div>
  <div class="fi" style="left:176px;top:265px"></div><div class="fn" style="left:193px;top:266px;letter-spacing:-0.775px">Ruby21</div>
  <div class="fi" style="left:176px;top:284px"></div><div class="fn" style="left:193px;top:285px;letter-spacing:-0.911px">Users</div>
  <div class="fi" style="left:176px;top:303px"></div><div class="fn" style="left:193px;top:304px;letter-spacing:-0.031px">Windows</div>
  <div class="fn" style="left:402px;top:152px;letter-spacing:-0.25px">File Folder</div>
  <!-- h scrollbar -->
  <div class="a" style="left:169px;top:489px;width:297px;height:17px;background:#f0f0f0"></div>
  <div class="a" style="left:186px;top:489px;width:163px;height:17px;background:#cdcdcd"></div>
  <svg style="left:174px;top:493px" width="7" height="10" viewBox="0 0 7 10"><path d="M5.500 1 L1.500 5 L5.500 9" stroke="#444" stroke-width="2" fill="none"/></svg>
  <!-- tabs row -->
  <div class="a" style="left:168px;top:506px;width:299px;height:24px;background:linear-gradient(#f7f7f7,#e9e9e9);border-top:1px solid #a5a5a5;border-left:1px solid #a0a0a0;border-right:1px solid #a8a8a8;box-sizing:border-box"></div>
  <div class="a" style="left:209px;top:507px;width:17px;height:21px;background:#dcdcdc;border:1px solid #c2c2c2;border-top:none;border-radius:0 0 4px 0;box-sizing:border-box"></div>
  <div class="a" style="left:169px;top:507px;width:40px;height:22px;background:#fff;border-radius:0 0 5px 5px;box-shadow:1px 1px 1px #bbb"></div>
  <svg style="left:172px;top:510px" width="16" height="16" viewBox="0 0 16 16"><rect x="0" y="0.5" width="2.800" height="2.800" fill="#19a8e8"/><rect x="3.400" y="0.5" width="2.800" height="2.800" fill="#19a8e8"/><rect x="0" y="3.900" width="2.800" height="2.800" fill="#19a8e8"/><rect x="3.400" y="3.900" width="2.800" height="2.800" fill="#19a8e8"/><path d="M3.500 7.500 H12.500 L14.500 10 H1.500Z" fill="#b9bcc0"/><rect x="1.500" y="9.800" width="13" height="4.400" rx="1" fill="#333638"/><rect x="1.500" y="9.800" width="13" height="1" fill="#6a6e72"/><rect x="11" y="11.600" width="2.200" height="1.400" fill="#4fe04a"/></svg>
  <div class="t" style="left:191px;top:511px">C:</div>
  <svg style="left:213px;top:513px" width="9" height="9" viewBox="0 0 9 9"><path d="M4.500 0.5 V8.500 M0.5 4.500 H8.500" stroke="#8a8a8a" stroke-width="1.600"/></svg>
</div>
<div id="rp" class="a">
  <div class="a" style="left:470px;top:97px;width:303px;height:433px;background:#fff;border-left:1px solid #a8a8a8;box-sizing:border-box"></div>
  <div class="ph" style="left:470px;width:303px;border-left:1px solid #3a5f9f;box-sizing:border-box;background:linear-gradient(#90b3e3,#6d9bd9 22%,#4d84cd 55%,#447ac5 90%,#6c99d6)"></div>
  <svg class="nav" style="left:474px" viewBox="0 0 20 20"><g opacity="1"><circle cx="10" cy="10" r="9.400" fill="url(#orb)" stroke="#14265f" stroke-width="1"/><ellipse cx="10" cy="5.800" rx="7.200" ry="4.600" fill="url(#gloss)"/></g><path d="M15 10 H6.500 M10 5.500 L5.500 10 L10 14.500" stroke="#fff" stroke-width="2.800" fill="none" stroke-linecap="round" stroke-linejoin="round" opacity="1"/></svg><svg class="nav" style="left:498px" viewBox="0 0 20 20"><g opacity="0.55"><circle cx="10" cy="10" r="9.400" fill="url(#orb)" stroke="#14265f" stroke-width="1"/><ellipse cx="10" cy="5.800" rx="7.200" ry="4.600" fill="url(#gloss)"/></g><path d="M5 10 H13.500 M10 5.500 L14.500 10 L10 14.500" stroke="#eef2f8" stroke-width="2.800" fill="none" stroke-linecap="round" stroke-linejoin="round" opacity="0.85"/></svg><svg class="nav" style="left:522px" viewBox="0 0 20 20"><g opacity="1"><circle cx="10" cy="10" r="9.400" fill="url(#orb)" stroke="#14265f" stroke-width="1"/><ellipse cx="10" cy="5.800" rx="7.200" ry="4.600" fill="url(#gloss)"/></g><path d="M10 15 V6.500 M5.500 10 L10 5.500 L14.500 10" stroke="#fff" stroke-width="2.800" fill="none" stroke-linecap="round" stroke-linejoin="round" opacity="1"/></svg><svg class="nav" style="left:547px;top:101px" viewBox="0 0 20 20"><path d="M10 0.800 L12.800 7 L19.500 7.700 L14.500 12.200 L15.900 18.900 L10 15.500 L4.100 18.900 L5.500 12.200 L0.5 7.700 L7.200 7Z" fill="url(#starg)" stroke="#d99a1c" stroke-width="1" stroke-linejoin="round"/><path d="M10 3 L11.600 8 L5 9.500 Z" fill="#fff3b0" opacity=".7"/></svg>
  <div class="pbox" style="left:572px;width:141px;background:linear-gradient(#e6edf8,#d9e4f4)"></div>
  <svg style="left:575px;top:104px" width="16" height="16" viewBox="0 0 16 16"><path d="M3.500 7.500 H12.500 L14.500 10 H1.500Z" fill="#b9bcc0"/><rect x="1.500" y="9.800" width="13" height="4.400" rx="1" fill="#333638"/><rect x="1.500" y="9.800" width="13" height="1" fill="#6a6e72"/><rect x="11" y="11.600" width="2.200" height="1.400" fill="#4fe04a"/></svg>
  <svg style="left:599px;top:107px" width="5" height="8" viewBox="0 0 5 8"><path d="M1 1 L4 4 L1 7" stroke="#444" stroke-width="1.500" fill="none"/></svg>
  <div class="t" style="left:611px;top:104px;font-size:12px">D:</div>
  <svg style="left:631px;top:107px" width="5" height="8" viewBox="0 0 5 8"><path d="M1 1 L4 4 L1 7" stroke="#444" stroke-width="1.500" fill="none"/></svg>
  <div class="dd" style="left:700px;top:110px"></div>
  <svg style="left:718px;top:104px" width="52" height="13" viewBox="0 0 52 13" fill="#d9e6f8"><path d="M6.500 1.500 L1.500 6.500 L6.500 11.500Z"/><rect x="8" y="1.500" width="3.500" height="10"/><path d="M23 1.500 L18 6.500 L23 11.500Z M25.500 1.500 L30.500 6.500 L25.500 11.500Z"/><path d="M38.500 1.500 L48.500 11.500 M48.500 1.500 L38.500 11.500" stroke="#d9e6f8" stroke-width="2.400"/></svg>
  <div class="ch" style="left:477px">Name</div>
  <svg style="left:521px;top:133px" width="10" height="6" viewBox="0 0 10 6"><path d="M0 6 L5 0.5 L10 6Z" fill="#b5b5b5"/></svg>
  <div class="a" style="left:591px;top:126px;width:1px;height:23px;background:#eaeaea"></div>
  <div class="ch" style="left:602px;letter-spacing:-0.7px">Size</div>
  <div class="a" style="left:627px;top:126px;width:1px;height:23px;background:#eaeaea"></div>
  <div class="ch" style="left:633px">Type</div>
  <div class="a" style="left:697px;top:126px;width:1px;height:23px;background:#eaeaea"></div>
  <div class="fi" style="left:478px;top:151px"></div><div class="fn" style="left:495px;top:152px">code</div>
  <div class="fn" style="left:632px;top:152px;letter-spacing:-0.25px">File Folder</div>
  <div class="fn" style="left:711px;top:152px">12/15/2015</div>
  <div class="fn" style="left:709px;top:171px">12/15/2015</div>
  <div class="fn" style="left:709px;top:190px">12/15/2015</div>
  <div class="fn" style="left:709px;top:209px">12/15/2015</div>
  <div class="fn" style="left:709px;top:228px">12/15/2015</div>
  <div class="fn" style="left:709px;top:247px">12/15/2015</div>
  <!-- h scrollbar -->
  <div class="a" style="left:471px;top:489px;width:302px;height:17px;background:#f0f0f0"></div>
  <div class="a" style="left:488px;top:489px;width:198px;height:17px;background:#cdcdcd"></div>
  <!-- tabs row -->
  <div class="a" style="left:470px;top:506px;width:303px;height:24px;background:linear-gradient(#f7f7f7,#e9e9e9);border-top:1px solid #a5a5a5;border-left:1px solid #a8a8a8;box-sizing:border-box"></div>
  <div class="a" style="left:511px;top:507px;width:17px;height:21px;background:#dcdcdc;border:1px solid #c2c2c2;border-top:none;border-radius:0 0 4px 0;box-sizing:border-box"></div>
  <div class="a" style="left:471px;top:507px;width:40px;height:22px;background:#fff;border-radius:0 0 5px 5px;box-shadow:1px 1px 1px #bbb"></div>
  <svg style="left:474px;top:510px" width="16" height="16" viewBox="0 0 16 16"><path d="M3.500 7.500 H12.500 L14.500 10 H1.500Z" fill="#b9bcc0"/><rect x="1.500" y="9.800" width="13" height="4.400" rx="1" fill="#333638"/><rect x="1.500" y="9.800" width="13" height="1" fill="#6a6e72"/><rect x="11" y="11.600" width="2.200" height="1.400" fill="#4fe04a"/></svg>
  <div class="t" style="left:493px;top:511px">D:</div>
  <svg style="left:515px;top:513px" width="9" height="9" viewBox="0 0 9 9"><path d="M4.500 0.5 V8.500 M0.5 4.500 H8.500" stroke="#8a8a8a" stroke-width="1.600"/></svg>
</div>
<div id="status" class="a">
  <div class="a" style="left:168px;top:530px;width:299px;height:21px;background:#f0f0f0;border-top:1px solid #dcdcdc;box-sizing:border-box"></div>
  <div class="a" style="left:470px;top:530px;width:303px;height:21px;background:#f0f0f0;border-top:1px solid #dcdcdc;box-sizing:border-box"></div>
  <div class="fi" style="left:173px;top:533px"></div>
  <div class="st" style="left:193px">0 / 9</div>
  <div class="ssep" style="left:222px"></div>
  <svg style="left:228px;top:533px" width="13" height="16" viewBox="0 0 13 16"><path d="M0.5 0.5 h7.500 l4.500 4.500 v10.500 h-12z" fill="#fff" stroke="#9a9a9a"/><path d="M8 0.5 v4.500 h4.500" fill="none" stroke="#9a9a9a"/></svg>
  <div class="st" style="left:248px">0 / 0</div>
  <div class="ssep" style="left:277px"></div>
  <div class="st" style="left:284px;color:#e0141c;font-weight:bold;letter-spacing:-0.2px">8 hidden</div>
  <div class="ssep" style="left:338px"></div>
  <svg style="left:346px;top:532px" width="17" height="17" viewBox="0 0 17 17"><path d="M8.500 8 V5 a3.200 3.200 0 0 1 6.400 0 V7" fill="none" stroke="#b4b4b4" stroke-width="2.200"/><rect x="0.5" y="7.500" width="10.500" height="8.500" rx="1" fill="#f2c94c" stroke="#b88a18"/><path d="M1.500 10.500 h8.500 M1.500 13 h8.500" stroke="#d9a92a" stroke-width="1"/></svg>
  <div class="ssep" style="left:365px"></div>
  <div class="st" style="left:372px;font-size:11px;letter-spacing:-0.3px">47.8 GB</div>
  <div class="a" style="left:415px;top:535px;width:49px;height:13px;box-sizing:border-box;border:1px solid #a8a8a8;border-radius:2px;background:#e6e6e6"></div><div class="a" style="left:416px;top:536px;width:18px;height:11px;background:linear-gradient(#62d4ee,#2eb3d6 45%,#0f6e8b 55%,#1a87a6)"></div>
  <div class="fi" style="left:473px;top:533px"></div>
  <div class="st" style="left:494px">1 / 6</div>
  <div class="ssep" style="left:523px"></div>
  <svg style="left:530px;top:533px" width="13" height="16" viewBox="0 0 13 16"><path d="M0.5 0.5 h7.500 l4.500 4.500 v10.500 h-12z" fill="#fff" stroke="#9a9a9a"/><path d="M8 0.5 v4.500 h4.500" fill="none" stroke="#9a9a9a"/></svg>
  <div class="st" style="left:550px">0 / 0</div>
  <div class="ssep" style="left:577px"></div>
  <div class="st" style="left:584px;color:#e0141c;font-weight:bold;letter-spacing:-0.2px">2 hidden</div>
  <div class="ssep" style="left:639px"></div>
  <svg style="left:650px;top:532px" width="17" height="17" viewBox="0 0 17 17"><path d="M8.500 8 V5 a3.200 3.200 0 0 1 6.400 0 V7" fill="none" stroke="#b4b4b4" stroke-width="2.200"/><rect x="0.5" y="7.500" width="10.500" height="8.500" rx="1" fill="#f2c94c" stroke="#b88a18"/><path d="M1.500 10.500 h8.500 M1.500 13 h8.500" stroke="#d9a92a" stroke-width="1"/></svg>
  <div class="ssep" style="left:669px"></div>
  <div class="st" style="left:676px;font-size:11px;letter-spacing:-0.25px">24.2 GB</div>
  <div class="a" style="left:719px;top:535px;width:49px;height:13px;box-sizing:border-box;border:1px solid #a8a8a8;border-radius:2px;background:#e6e6e6"></div><div class="a" style="left:720px;top:536px;width:19px;height:11px;background:linear-gradient(#62d4ee,#2eb3d6 45%,#0f6e8b 55%,#1a87a6)"></div>
</div>

<!-- POPUP -->
<div id="pop" class="a">
  <div class="t" style="left:6px;top:4px;font-size:16px;line-height:20px;height:20px;color:#a3a3a3">Path</div>
  <div class="a" style="left:323px;top:5px;width:34px;height:15px;border:1px solid #b8b8b8;border-radius:3px;box-sizing:content-box"></div>
  <div class="t" style="left:327px;top:6px;font-size:13px;color:#a8a8a8;letter-spacing:-0.4px">100+</div>
  <div class="a" style="left:0;top:25px;width:368px;height:1px;background:#e4e4e4"></div>
  <div class="a" style="left:364px;top:0px;width:4px;height:21px;background:#c9c9c9"></div>
  <div class="pr" style="top:28px"><div class="pf"></div><div class="pn" style="letter-spacing:0.107px"><u>Languages</u></div><div class="pp" style="letter-spacing:0.346px">Listary\src\build\Debug</div></div>
  <div class="pr" style="top:67px"><div class="pf"></div><div class="pn" style="letter-spacing:0.107px"><u>Languages</u></div><div class="pp" style="letter-spacing:0.148px">Listary\src\build\Release</div></div>
  <div class="pr sel" style="top:106px"><div class="pf"></div><div class="pn" style="letter-spacing:0.225px"><u>languages</u></div><div class="pp" style="letter-spacing:0.105px">Listary\src\listary</div></div>
  <div class="pr" style="top:145px"><div class="pf"></div><div class="pn" style="letter-spacing:0.161px">copy<u>_languages</u></div><div class="pp" style="letter-spacing:0.438px">Listary\src\build\Debug\obj</div></div>
  <div class="pr" style="top:184px"><div class="pf"></div><div class="pn" style="letter-spacing:0.161px">copy<u>_languages</u></div><div class="pp" style="letter-spacing:0.254px">Listary\src\build\Release\obj</div></div>
  <div class="pr" style="top:223px"><div class="pf"></div><div class="pn" style="letter-spacing:0.23px">copy<u>_languages</u>.tlog</div><div class="pp" style="letter-spacing:0.248px">Listary\src\build\Release\obj\copy_languages</div></div>
  <div class="pr" style="top:262px"><div class="pf"></div><div class="pn" style="letter-spacing:0.23px">copy<u>_languages</u>.tlog</div><div class="pp" style="letter-spacing:0.37px">Listary\src\build\Debug\obj\copy_languages</div></div>
  <div class="a" style="left:0;top:300px;width:368px;height:1px;background:#cfcfcf"></div>
  <div class="t" style="left:11px;top:306px;font-size:19px;line-height:24px;height:24px;color:#444">languages</div>
  <div class="a" style="left:334px;top:314px;width:6px;height:6px;border-radius:3px;background:#d9d9d9"></div><div class="a" style="left:343px;top:314px;width:6px;height:6px;border-radius:3px;background:#d9d9d9"></div><div class="a" style="left:352px;top:314px;width:6px;height:6px;border-radius:3px;background:#d9d9d9"></div>
</div>
<div id="frame"></div>
</div>
</body>
</html>
